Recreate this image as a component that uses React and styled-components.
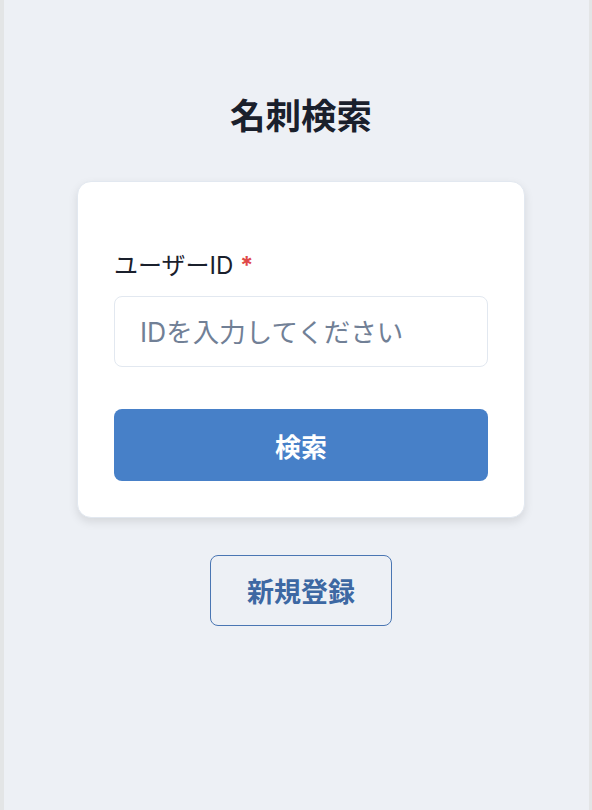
import React, { useState } from 'react';
import styled, { createGlobalStyle } from 'styled-components';

const GlobalStyle = createGlobalStyle`
  html, body {
    margin: 0;
    padding: 0;
    background: #edf0f5;
    font-family: "Inter", "Noto Sans CJK JP", sans-serif;
  }
  * { box-sizing: border-box; }
`;

const App = () => {
  const [userId, setUserId] = useState('');

  const handleSubmit = (e) => {
    e.preventDefault();
  };

  return (
    <>
      <GlobalStyle />
      <Page>
        <EdgeBar $width={4} />
        <Main>
          <Title>名刺検索</Title>
          <Card onSubmit={handleSubmit}>
            <Label htmlFor="userId">
              ユーザーID <Required>*</Required>
            </Label>
            <Input
              id="userId"
              value={userId}
              onChange={(e) => setUserId(e.target.value)}
              placeholder="IDを入力してください"
            />
            <SearchButton type="submit">検索</SearchButton>
          </Card>
          <RegisterButton type="button">新規登録</RegisterButton>
        </Main>
        <EdgeBar $width={3} />
      </Page>
    </>
  );
};

export default App;

const Page = styled.div`
  display: flex;
  min-height: 810px;
`;

const EdgeBar = styled.div`
  flex: 0 0 ${(p) => p.$width}px;
  background: #e3e5e6;
`;

const Main = styled.main`
  flex: 1;
  display: flex;
  flex-direction: column;
  align-items: center;
  padding: 96px 0 0 9px;
`;

const Title = styled.h1`
  margin: 0 0 43px;
  font-size: 35.5px;
  line-height: 42px;
  font-weight: 700;
  color: #1a202c;
`;

const Card = styled.form`
  width: 448px;
  display: flex;
  flex-direction: column;
  background: #fff;
  border: 1px solid #e2e8f0;
  border-radius: 14px;
  box-shadow: 0 4px 10px rgba(0, 0, 0, 0.1);
  padding: 68px 36px 36px;
`;

const Label = styled.label`
  font-size: 24px;
  line-height: 32px;
  color: #1a202c;
  margin-bottom: 14px;
`;

const Required = styled.span`
  color: #e04848;
  font-weight: 700;
`;

const Input = styled.input`
  height: 71px;
  width: 100%;
  border: 1px solid #e2e8f0;
  border-radius: 8px;
  padding: 0 25px;
  font-size: 26.5px;
  font-family: inherit;
  color: #1a202c;
  outline: none;

  &::placeholder {
    color: #718096;
  }
`;

const SearchButton = styled.button`
  margin-top: 42px;
  height: 72px;
  width: 100%;
  border: none;
  border-radius: 8px;
  background: #4780c8;
  color: #fff;
  font-size: 26px;
  font-weight: 700;
  font-family: inherit;
  cursor: pointer;
`;

const RegisterButton = styled.button`
  margin-top: 37px;
  width: 182px;
  height: 71px;
  background: transparent;
  border: 1.5px solid #4a76b3;
  border-radius: 8px;
  color: #3d68a3;
  font-size: 27px;
  font-weight: 700;
  font-family: inherit;
  cursor: pointer;
`;
